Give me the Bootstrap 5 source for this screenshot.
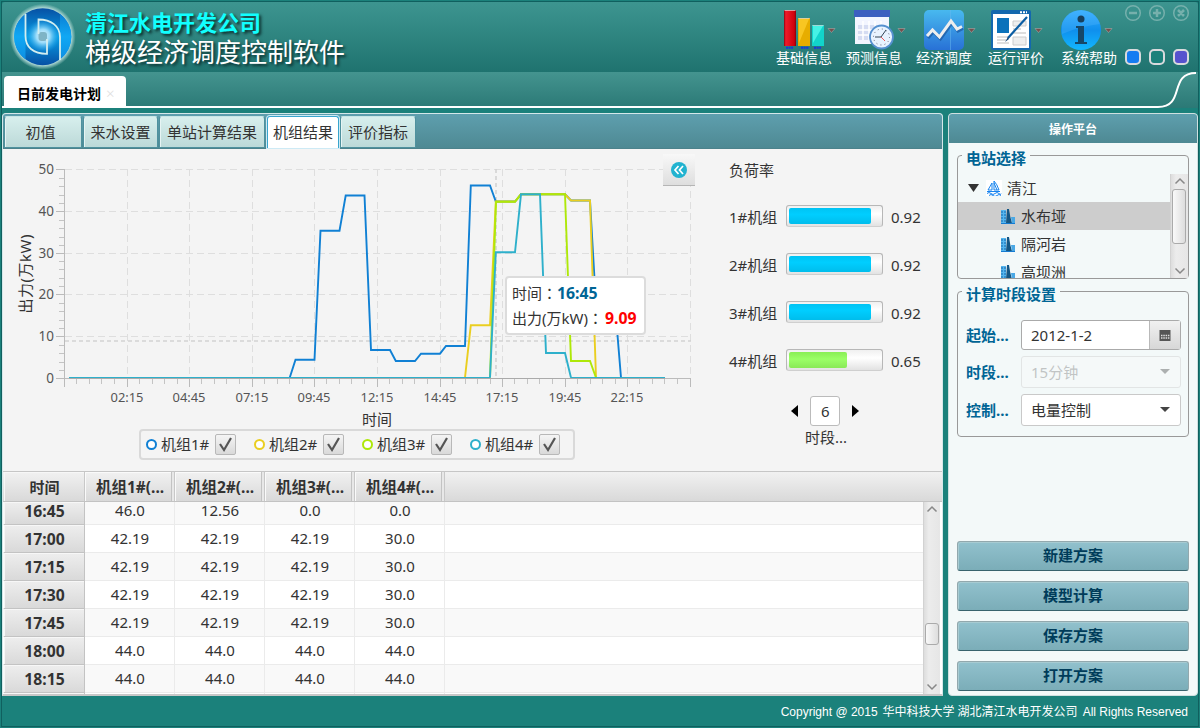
<!DOCTYPE html>
<html lang="zh-CN">
<head>
<meta charset="utf-8">
<title>梯级经济调度控制软件</title>
<meta name="viewport" content="width=device-width, initial-scale=1">
<link href="https://cdn.jsdelivr.net/npm/bootstrap@5.3.0/dist/css/bootstrap.min.css" rel="stylesheet">
<style>
body{font:15px/20px "Noto Sans","Noto Sans CJK SC",sans-serif;color:#333;background:#1b817b;width:1200px;height:728px;overflow:hidden}
.app{width:1200px;height:728px;padding:0 0 0 2px;box-shadow:inset 1px 1px 0 #1b817b,inset -1px -1px 0 #1b817b,inset 2px 2px 0 #10605f,inset -2px -2px 0 #10605f;background:#1b817b}
.topbar{height:70px;margin:2px 2px 0 0;background:linear-gradient(#3d9590,#1f736f);border-radius:3px 3px 0 0}
.logo{width:70px;height:70px;margin-left:5px}
.titles{width:690px;padding:8px 0 0 8px}
.t1{font:bold 22px/25px "Noto Sans CJK SC",sans-serif;color:#1ff;text-shadow:2px 2px 3px #0a2b2b;margin-top:-1px}
.t2{font:26px/34px "Noto Sans CJK SC",sans-serif;color:#fff;text-shadow:2px 2px 3px #0a2b2b}
.tool{color:#fff;font:14px/18px "Noto Sans CJK SC",sans-serif;padding-top:8px;white-space:nowrap}
.tool svg{display:block;height:40px;margin-bottom:-2px;overflow:visible}
.strip{height:36px;margin-right:2px;background:linear-gradient(#44948f,#2b7976);}
.doctab{width:122px;height:31px;margin:4px 0 0 2px;background:#fff;border-radius:4px 4px 0 0;color:#000;font:bold 14px/34px "Noto Sans CJK SC",sans-serif;padding-left:13px}
.doctab small{color:#ddd;font:300 15px/25px "Noto Sans";margin-left:5px}
.workspace{height:583px;margin-top:5px;gap:5px}
.leftp{width:941px;border:1px solid #d5e8ea;border-bottom:2px solid #c8c8c8;border-radius:4px 4px 0 0;background:#f4f4f4;overflow:hidden}
.tabsrow{height:35px;background:linear-gradient(#5e9fae,#4e8993);border-bottom:1px solid #4c828b;padding:2px 0 0 1px}
.tabsrow a{height:32px;font-size:15px;line-height:31px;text-align:center;color:#333;text-decoration:none;background:linear-gradient(#d7efed,#bcd9d8);border:1px solid #4f919e;border-top-color:#c7e6e6;border-radius:3px 3px 0 0;white-space:nowrap;box-shadow:inset 1px 0 #e6f4f3}
.tabsrow a.on{background:#fff;border:1px solid #39a5cd;border-bottom:0;box-shadow:0 0 0 1px #cdeaf5}
.chartzone{height:322px}
.plot{width:694px;height:322px;position:relative}
.plot svg text{font-family:"Noto Sans","Noto Sans CJK SC",sans-serif}
.tip{position:absolute;left:502px;top:127px;width:141px;height:59px;background:#fff;border:2px solid #dcdcdc;border-radius:4px;padding:3px 5px 0;line-height:25px;white-space:nowrap}
.tip b{font-size:15.8px}
.tip i{font:15px/1 "Noto Sans CJK TC",sans-serif}
.fold{position:absolute;left:660px;top:5px;width:32px;height:32px;background:linear-gradient(#f8f8f8,#dedede);border-bottom:1px solid #b5b5b5}
.legendbox{position:absolute;left:136px;top:280px;width:436px;height:31px;border:2px solid #d9d9d9;border-radius:4px;padding-left:5px}
.lg{width:108px;flex:0 0 auto;white-space:nowrap;height:26px}
.ring{width:11px;height:11px;border:2.5px solid;border-radius:50%;background:#fff;margin-right:4px}
.chk{width:21px;height:21px;border:1px solid #b8b8b8;border-radius:2px;background:linear-gradient(#f5f5f5,#d9d9d9);margin-left:6px}
.load{padding:11px 0 0 32px;width:245px}
.load h6{font:15px/20px "Noto Sans CJK SC",sans-serif;margin:0 0 24px}
.lrow{height:24px;margin-bottom:24px;width:193px;padding-top:1px}
.lrow>span:first-child{width:57px}
.bar{width:97px;height:22px;border:1px solid #b7b7b7;border-bottom-color:#cfcfcf;border-radius:3px;background:linear-gradient(#f0f0f0,#fff 40%,#e2e2e2);padding:2px;margin-top:-2px}
.bar i{display:block;height:16px;border-radius:2px;background:linear-gradient(#00c3f3,#00ceff 40%,#00bdec)}
.bar i.g{background:linear-gradient(#89ee56,#9bff67 45%,#89e957)}
.num{width:30px;height:30px;border:1px solid #bbb;border-radius:3px;background:#fff;line-height:29px;padding-left:10px}
.arr{width:7px;height:12px;background:#000;clip-path:polygon(100% 0,0 50%,100% 100%)}
.arr.r{transform:scaleX(-1)}
.grid{height:224px;background:#fff;border-top:1px solid #c6c6c6;overflow:hidden}
.ghead{height:30px;background:linear-gradient(#f1f1f1,#d9d9d9);border-bottom:1px solid #c3c3c3;font-weight:700;line-height:30px;padding-left:1px}
.ghead div{width:90px;text-align:center;border-right:1px solid #c8c8c8;box-shadow:inset -2px 0 #e8e8e8,inset -3px 0 #c3c3c3,inset 1px 1px #fafafa;padding-left:1px}
.ghead div+div{font-size:15.5px}
.ghead div:first-child,.grow b{width:81px!important;box-shadow:inset 1px 1px #f7f7f7!important}
.gbody{height:192px;overflow:hidden}
.rows{width:920px}
.grow{height:28px;border-bottom:1px solid #ebebeb;line-height:27px;padding-left:1px}
.grow:nth-child(odd){background:#f9f9f9}
.grow b{height:28px;line-height:28px;font-size:15.7px;padding-left:1px;text-align:center;background:linear-gradient(#eee,#d9d9d9);border-right:1px solid #c3c3c3;border-bottom:1px solid #c3c3c3}
.grow:first-child{height:23px;line-height:17px}
.grow:first-child b{height:23px;line-height:19px}
.grow:last-child{height:5px}
.grow span{width:90px;text-align:center;border-right:1px solid #ebebeb;padding-left:1px}
.sbar{width:17px;background:linear-gradient(90deg,#ddd,#ececec 30%,#e6e6e6);border-left:1px solid #d2d2d2}
.sbar svg{display:block;width:12px;height:8px;margin:3px auto}
.thumb{width:14px;border:1px solid #aaa;border-radius:3px;background:linear-gradient(90deg,#f9f9f9,#ddd);margin-left:1px}
.rightp{width:250px;background:#f3f9f9;border:1px solid #cfe0e0;border-radius:4px;overflow:hidden}
.rhead{height:29px;background:linear-gradient(#5e9fae,#4e8993);color:#fff;font:bold 12px/29px "Noto Sans CJK SC",sans-serif;text-align:center}
.fbox{width:232px;border:1.5px solid #999;border-radius:4px;margin-left:8px}
.fbox>h5{font:bold 15px/20px "Noto Sans CJK SC",sans-serif;color:#006595;background:#f3f9f9;margin:-8px 0 0 4px;padding:0 4px;width:max-content}
.station{height:124px;margin-top:12px}
.tree{height:104px;margin-top:6px;overflow:hidden}
.tree .ti{height:28px;padding-left:43px;gap:5px;font-family:"Noto Sans CJK SC",sans-serif}
.ti.sel{background:#cdcdcd}
.period{height:146px;margin-top:12px}
.frow{height:31px;margin:0 7px 7px 7px}
.frow label{width:56px;padding-left:1px;color:#006595;font-weight:700;white-space:nowrap}
.inp{width:160px;height:30px;background:#fff;border:1px solid #c9c9c9;border-radius:3px;padding-left:9px}
.inp.off{opacity:.4;background:#fafafa;height:32px;color:#777}
.inp.sel2{height:32px}
.dn{width:10px;height:5px;background:#444;clip-path:polygon(0 0,100% 0,50% 100%);margin:0 10px 0 auto}
.cal{width:31px;height:28px;margin-left:auto;border-left:1px solid #b9b9b9;background:linear-gradient(#f1f1f1,#d7d7d7)}
.acts{margin:104px 8px 0;gap:10px}
.acts .btn{height:30px;padding:0 0 2px;font:bold 15px/26px "Noto Sans CJK SC",sans-serif;color:#003c5a;border:1px solid #92a8ad;border-bottom-color:#38636d;border-radius:3px;background:linear-gradient(#91c1cd,#7badb8);box-shadow:inset 1px 1px #a7cbd2}
.foot{height:32px;color:#fff;font:12px/32px "Liberation Sans","Noto Sans CJK SC",sans-serif;padding-right:12px}
</style>
</head>
<body>
<div class="app d-flex flex-column">
<header class="topbar d-flex flex-shrink-0">
 <svg class="logo flex-shrink-0" viewBox="7 2 70 70">
  <defs><radialGradient id="lgA"><stop offset="0" stop-color="#fff"/><stop offset=".86" stop-color="#b4dcd8"/><stop offset="1" stop-color="#a9d3cf" stop-opacity="0"/></radialGradient>
  <linearGradient id="lgB" x1="0" y1="0" x2="0" y2="1"><stop offset="0" stop-color="#0750a4"/><stop offset=".5" stop-color="#079de5"/><stop offset="1" stop-color="#0750a4"/></linearGradient>
  <linearGradient id="lgC" x1="0" y1="0" x2="0" y2="1"><stop offset="0" stop-color="#0b7fd4"/><stop offset=".5" stop-color="#10a8f4"/><stop offset="1" stop-color="#0d8fe3"/></linearGradient>
  <radialGradient id="lgD"><stop offset="0" stop-color="#e0f5ff"/><stop offset=".4" stop-color="#9bdcfa"/><stop offset="1" stop-color="#14a5ef" stop-opacity="0"/></radialGradient></defs>
  <circle cx="42.700" cy="36.700" r="33" fill="url(#lgA)"/><circle cx="42.700" cy="36.700" r="28.500" fill="url(#lgB)"/>
  <path d="M25.500 13.800A28.500 28.500 0 0 0 25.500 59.500Z" fill="url(#lgC)"/><path d="M60 59.500A28.500 28.500 0 0 0 60 13.800Z" fill="url(#lgC)"/>
  <circle cx="43" cy="36" r="17" fill="url(#lgD)"/>
  <rect x="38.500" y="32" width="8.500" height="9" rx="3" fill="#7fb4c6"/>
  <path d="M25.500 14V36C25.500 47 33 53.800 47 53.800V39M60 60V37C60 26 51 19.500 38.500 19.500V34" fill="none" stroke="#d3eef0" stroke-width="1.800"/>
 </svg>
 <div class="titles flex-shrink-0"><div class="t1">清江水电开发公司</div><div class="t2">梯级经济调度控制软件</div></div>
 <div class="d-flex flex-shrink-0" style="margin-left:9px">
 <div class="tool" style="width:70px"><svg width="60" viewBox="0 0 60 40"><defs><linearGradient id="r"><stop stop-color="#8e0010"/><stop offset=".15" stop-color="#ef1b2a"/><stop offset=".85" stop-color="#d0000c"/><stop offset="1" stop-color="#85000b"/></linearGradient></defs><path d="M8 0h12v36H8z" fill="url(#r)"/><path d="M22 8h12v28H22z" fill="#e7ad00"/><path d="M33 9L23 33V9z" fill="#ffd030" fill-opacity=".7"/><path d="M36 15h12v21H36z" fill="#12d4cb"/><path d="M47 16L37 33V16z" fill="#5cfff0" fill-opacity=".7"/><path d="M8.500 .5h11M22.500 8.500h11M36.500 15.500h11" stroke="#ddd" stroke-opacity=".7"/><path d="M10 37.800h7M25 37.800h8M38 37.800h7" stroke="#1736e0" stroke-width="2" stroke-dasharray="2 .6"/><path d="M52 18.500h7l-3.500 4z" fill="#754f4c" stroke="#a8a8a8" stroke-width=".6"/></svg>基础信息</div>
 <div class="tool" style="width:70px"><svg width="60" viewBox="0 0 60 40"><path d="M9 2h34v32H9z" fill="#f2f5ff"/><path d="M8 0h36v7H8z" fill="#3b5fc0"/><path d="M12 15h28v15H12z" fill="#d5dcf2"/><path d="M17 11v19M23 11v19M29 11v19M35 11v19M12 20h28M12 25h28" stroke="#fff" stroke-width="1.500"/><circle cx="35.500" cy="27" r="11.500" fill="#e8f3ff" stroke="#5590cf" stroke-width="1.800"/><circle cx="35.500" cy="27" r="8" fill="none" stroke="#667" stroke-dasharray="1 3.200"/><path d="M40 20l-5 7h-6" fill="none" stroke="#345"/><path d="M35 27l4 4" stroke="#e55"/><path d="M52 18.500h7l-3.500 4z" fill="#754f4c" stroke="#a8a8a8" stroke-width=".6"/></svg>预测信息</div>
 <div class="tool" style="width:72px"><svg width="60" viewBox="0 0 60 40"><defs><linearGradient id="b" x1="0" y1="0" x2="0" y2="1"><stop stop-color="#48b9ef"/><stop offset="1" stop-color="#2871d6"/></linearGradient></defs><rect x="8" width="40" height="40" rx="5" fill="url(#b)"/><path d="M34.500 0v40" stroke="#68b8ef" stroke-opacity=".5"/><path d="M11 26l5.500-6 7 7L35 11l6 8 5-2.500" transform="translate(1 2)" fill="none" stroke="#174f95" stroke-opacity=".6" stroke-width="3"/><path d="M11 26l5.500-6 7 7L35 11l6 8 5-2.500" fill="none" stroke="#eee" stroke-width="3"/><path d="M52 18.500h7l-3.500 4z" fill="#754f4c" stroke="#a8a8a8" stroke-width=".6"/></svg>经济调度</div>
 <div class="tool" style="width:73px"><svg width="60" viewBox="0 0 60 40"><rect x="3" width="40" height="40" rx="2" fill="#1368ae"/><path d="M5 4h36v34H5z" fill="#fff"/><path d="M32 2.200h7" stroke="#fff" stroke-width="2" stroke-dasharray="2 1"/><path d="M9 8h12v15H9z" fill="#0b72bb"/><path d="M25 11h13v5H25zM25 27h13v8H25z" fill="#eee" stroke="#ccc"/><path d="M9 27h12M9 30h9M9 33h12M25 19h8M25 23h13" stroke="#bbb"/><path d="M39 7L20 28" stroke="#0b5da3" stroke-width="2.200"/><path d="M20 27l-3 5 4-3" fill="#134475"/><path d="M47 18.500h7l-3.500 4z" fill="#754f4c" stroke="#a8a8a8" stroke-width=".6"/></svg>运行评价</div>
 <div class="tool" style="width:59px"><svg width="60" viewBox="0 0 60 40"><defs><linearGradient id="i" x1="0" y1="0" x2="0" y2="1"><stop stop-color="#36adff"/><stop offset=".5" stop-color="#0f8fed"/><stop offset="1" stop-color="#12b7ff"/></linearGradient></defs><circle cx="20" cy="20" r="20" fill="url(#i)"/><path d="M1 24Q20 16 39 14A20 20 0 0 0 1 14Z" fill="#64bfff" fill-opacity=".25"/><circle cx="20" cy="9" r="3.500" fill="#173f5d"/><path d="M15 16h8v16h3v2H14v-2h3V18h-2z" fill="#164768"/><path d="M44 18.500h7l-3.500 4z" fill="#754f4c" stroke="#a8a8a8" stroke-width=".6"/></svg>系统帮助</div>
 </div>
 <svg width="76" height="70" viewBox="1120 2 76 70" class="flex-shrink-0" style="margin-left:-1px"><g fill="none" stroke="#76b0ac" stroke-width="1.5"><circle cx="1134" cy="13" r="7.300"/><circle cx="1158" cy="13" r="7.300"/><circle cx="1182" cy="13" r="7.300"/><path d="M1130 13h8M1154 13h8M1158 9v8M1179 10l6 6M1185 10l-6 6" stroke-width="2.500"/></g><g stroke="#d8dadd" stroke-width="2"><rect x="1127" y="50" width="14" height="14" rx="4" fill="#157cf2"/><rect x="1151" y="50" width="14" height="14" rx="4" fill="#1b817b"/><rect x="1175" y="50" width="14" height="14" rx="4" fill="#5752ce"/></g></svg>
</header>
<div class="strip d-flex flex-shrink-0 position-relative">
 <div class="doctab">日前发电计划<small>×</small></div>
 <svg class="position-absolute top-0 start-0" width="1196" height="37" viewBox="2 72 1196 37"><path d="M2 107H1158C1186 107 1168 73 1196 73" fill="none" stroke="#fff" stroke-width="2"/></svg>
</div>
<main class="workspace d-flex flex-shrink-0">
 <section class="leftp">
  <nav class="tabsrow d-flex">
   <a style="width:78px;padding-right:5px;margin-right:1px">初值</a><a style="width:75px;margin-right:1px">来水设置</a><a style="width:106px;margin-right:2px">单站计算结果</a><a class="on" style="width:72px;margin-right:1px">机组结果</a><a style="width:76px">评价指标</a>
  </nav>
  <div class="chartzone d-flex">
   <div class="plot">
    <svg id="chart" width="694" height="322" viewBox="3 149 694 322"></svg>
    <div class="fold"><svg width="32" height="32"><circle cx="16" cy="16" r="8" fill="#22b3d0"/><path d="M15.500 12l-3.500 4 3.500 4M20 12l-3.500 4 3.500 4" fill="none" stroke="#fff" stroke-width="1.700"/></svg></div>
    <div class="tip"><div>时间<i lang="zh-TW">：</i><b style="color:#006595">16:45</b></div><div>出力(万kW)<i lang="zh-TW" style="letter-spacing:2px">：</i><b style="color:red">9.09</b></div></div>
    <div class="legendbox d-flex" id="legend"></div>
   </div>
   <div class="load"><h6>负荷率</h6><div id="loads"></div>
    <div class="d-flex align-items-center" style="padding-left:62px;margin-top:1px"><div class="arr"></div><div class="num" style="margin:0 12px">6</div><div class="arr r"></div></div>
    <div style="padding-left:76px;line-height:23px">时段...</div>
   </div>
  </div>
  <div class="grid">
   <div class="ghead d-flex"><div>时间</div><div>机组1#(...</div><div>机组2#(...</div><div>机组3#(...</div><div>机组4#(...</div></div>
   <div class="gbody d-flex"><div class="rows" id="rows"></div>
    <div class="sbar d-flex flex-column"><svg viewBox="0 0 12 8"><path d="M1.500 6.500L6 2l4.500 4.500" fill="none" stroke="#888" stroke-width="1.500"/></svg><div class="thumb" style="height:22px;margin-top:107px"></div><svg viewBox="0 0 12 8" style="margin-top:auto"><path d="M1.500 1.500L6 6l4.500-4.500" fill="none" stroke="#888" stroke-width="1.500"/></svg></div>
   </div>
  </div>
 </section>
 <aside class="rightp">
  <div class="rhead">操作平台</div>
  <div class="fbox station"><h5>电站选择</h5>
   <div class="tree d-flex"><div class="flex-grow-1" id="tree">
     <div class="ti d-flex align-items-center" style="padding-left:10px"><svg width="13" height="10"><path d="M0 1h11L5.500 9z" fill="#333"/></svg><svg width="16" height="16"><path d="M0 0h16v16H0z" fill="#fff"/><path d="M6 3L2 10h4zM8 1v9h5Q11 4 8 1M1 11.500h13M8 3l3 7" fill="none" stroke="#1683ef"/><path d="M1 13.500q2-2 4 0t4 0 4 0 2 0M3 15.500q2-2 4 0t4 0 4 0" fill="none" stroke="#1683ef"/></svg>清江</div>
   </div>
   <div class="sbar d-flex flex-column flex-shrink-0" style="width:18px"><svg viewBox="0 0 12 8"><path d="M1.500 6.500L6 2l4.500 4.500" fill="none" stroke="#888" stroke-width="1.500"/></svg><div class="thumb" style="height:55px;margin-top:1px"></div><svg viewBox="0 0 12 8" style="margin-top:auto"><path d="M1.500 1.500L6 6l4.500-4.500" fill="none" stroke="#888" stroke-width="1.500"/></svg></div></div>
  </div>
  <div class="fbox period"><h5>计算时段设置</h5>
   <div class="frow d-flex align-items-center" style="margin-top:15px"><label>起始...</label><div class="inp d-flex align-items-center" style="border-color:#aaa">2012-1-2<div class="cal"><svg width="30" height="28"><rect x="9.500" y="9" width="11" height="11" fill="#555"/><path d="M11 14.500h8.500M11 17h8.500" stroke="#ddd" stroke-width="1.600" stroke-dasharray="1.500 .8"/></svg></div></div></div>
   <div class="frow d-flex align-items-center" style="margin-top:-1px"><label>时段...</label><div class="inp off d-flex align-items-center">15分钟<div class="dn"></div></div></div>
   <div class="frow d-flex align-items-center"><label>控制...</label><div class="inp sel2 d-flex align-items-center">电量控制<div class="dn"></div></div></div>
  </div>
  <div class="acts d-flex flex-column"><button class="btn">新建方案</button><button class="btn">模型计算</button><button class="btn">保存方案</button><button class="btn">打开方案</button></div>
 </aside>
</main>
<footer class="foot d-flex justify-content-end"><span style="margin-right:5px">Copyright @ 2015</span><span style="margin-right:3px">华中科技大学</span><span style="margin-right:5px">湖北清江水电开发公司</span><span>All Rights Reserved</span></footer>
</div>
<script src="https://cdn.jsdelivr.net/npm/bootstrap@5.3.0/dist/js/bootstrap.bundle.min.js"></script>
<script>
// Chart: grid, axes, then one polyline per unit
let s='';
for(let k=0;k<=5;k++){const y=Math.round(378-k*41.8)+.5;
 if(k)s+=`<path d="M65 ${y}H691" stroke="#dedede" stroke-dasharray="7 4"/>`;
 s+=`<path d="M56 ${y}H64" stroke="#bbb"/><text x="54" y="${y+4.5}" font-size="13.5" fill="#555" text-anchor="end">${k*10}</text>`;
 if(k<5)for(let m=1;m<5;m++){const q=Math.round(y-m*8.36)+.5;s+=`<path d="M59 ${q}H64" stroke="#c4c4c4"/>`}}
const times=['02:15','04:45','07:15','09:45','12:15','14:45','17:15','19:45','22:15'];
for(let k=0;k<=10;k++){const x=Math.round(64+k*62.6)+.5;
 if(k)s+=`<path d="M${x} 169V378" stroke="#dedede" stroke-dasharray="7 4"/>`;
 s+=`<path d="M${x} 378V387" stroke="#bbb"/>`;
 if(k>0&&k<10)s+=`<text x="${x-.5}" y="402" font-size="13" fill="#555" text-anchor="middle" textLength="33" lengthAdjust="spacingAndGlyphs">${times[k-1]}</text>`;
 if(k<10)for(let m=1;m<5;m++){const q=Math.round(x+m*12.5)-.5;s+=`<path d="M${q} 378V384" stroke="#c4c4c4"/>`}}
s+='<path d="M64.500 169V378.500H691" fill="none" stroke="#bbb"/><path d="M65 341H691M496 169V378" stroke="#d2d2d2" stroke-width="1.600" stroke-dasharray="4 3"/>';
const lines=[['#1080d4','289.7,377.7 295.5,359.7 314.5,359.7 320.5,230.700 339.5,230.700 345.7,195.500 364.5,195.500 371,350 390,350 395.8,361 415,361 421,353.700 440,353.700 446,346 465,346 470.800,185.500 490,185.500 495.800,201.500 515,201.500 521,194.300 565,194.300 571,200.500 590,200.500 596,305 615,305 621,377.700'],
['#eace20','465,377.700 470.800,325.300 490,325.300 495.800,201.500 515,201.500 521,194.300 565,194.300 571,200.500 590,200.500 596,377.700'],
['#aee808','490,377.700 496,201.800 515,201.800 521,194.300 565,194.300 571,361 590,361 596,377.700'],
['#2eb0cb','490,377.700 495.800,252.300 515,252.300 521,194.300 540,194.300 546,353 565,353 571,377.700']];
lines.forEach(l=>s+=`<polyline points="${l[1]}" fill="none" stroke="${l[0]}" stroke-width="1.9"/>`);
s+='<path d="M69 377.500H490M571 377.500H665" stroke="#2eb0cb"/><path d="M69 378.500H665" stroke="#aaa"/>';
s+='<text transform="translate(31 274) rotate(-90)" text-anchor="middle" font-size="15" textLength="79" fill="#333">出力(万kW)</text><text x="377" y="425" text-anchor="middle" font-size="15" fill="#333">时间</text>';
chart.innerHTML=s;
legend.innerHTML=lines.map((l,i)=>`<div class="lg d-flex align-items-center"><span class="ring" style="border-color:${l[0]}"></span>机组${i+1}#<span class="chk"><svg width="19" height="19" class="d-block"><path d="M4 9l4 6 7-12" fill="none" stroke="#555" stroke-width="2.200"/></svg></span></div>`).join('');
loads.innerHTML=[.92,.92,.92,.65].map((v,i)=>`<div class="lrow d-flex align-items-center"><span>${i+1}#机组</span><div class="bar"><i class="${v<.8?'g':''}" style="width:${v*98}%"></i></div><span class="ms-2">${v}</span></div>`).join('');
rows.innerHTML=[['16:45','46.0','12.56','0.0','0.0'],...['17:00','17:15','17:30','17:45'].map(t=>[t,'42.19','42.19','42.19','30.0']),...['18:00','18:15'].map(t=>[t,'44.0','44.0','44.0','44.0']),['','','','','']].map(r=>`<div class="grow d-flex"><b>${r[0]}</b>${r.slice(1).map(v=>`<span>${v}</span>`).join('')}</div>`).join('');
tree.innerHTML+=['水布垭','隔河岩','高坝洲'].map((n,i)=>`<div class="ti d-flex align-items-center ${i?'':'sel'}"><svg width="15" height="15"><path d="M0 1h5v13H0z" fill="#55b6ef"/><path d="M0 3h5M0 6h5M0 9h5M0 12h5" stroke="#1769ad" stroke-dasharray="2 1"/><path d="M6 0h2q1 8 3 14H5z" fill="#145684"/><path d="M10 8h4v6h-3z" fill="#49a8e5"/><path d="M0 14.500h14" stroke="#177bd0"/></svg>${n}</div>`).join('');
</script>
</body>
</html>
